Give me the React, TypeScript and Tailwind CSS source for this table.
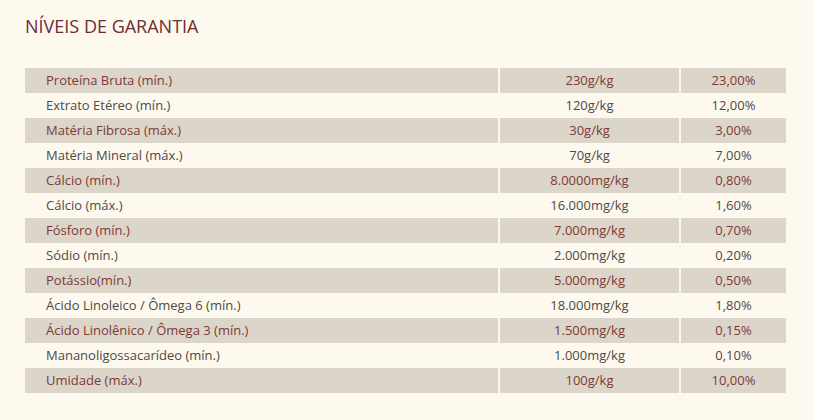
const rows = [
  ["Proteína Bruta (mín.)", "230g/kg", "23,00%"],
  ["Extrato Etéreo (mín.)", "120g/kg", "12,00%"],
  ["Matéria Fibrosa (máx.)", "30g/kg", "3,00%"],
  ["Matéria Mineral (máx.)", "70g/kg", "7,00%"],
  ["Cálcio (mín.)", "8.0000mg/kg", "0,80%"],
  ["Cálcio (máx.)", "16.000mg/kg", "1,60%"],
  ["Fósforo (mín.)", "7.000mg/kg", "0,70%"],
  ["Sódio (mín.)", "2.000mg/kg", "0,20%"],
  ["Potássio(mín.)", "5.000mg/kg", "0,50%"],
  ["Ácido Linoleico / Ômega 6 (mín.)", "18.000mg/kg", "1,80%"],
  ["Ácido Linolênico / Ômega 3 (mín.)", "1.500mg/kg", "0,15%"],
  ["Mananoligossacarídeo (mín.)", "1.000mg/kg", "0,10%"],
  ["Umidade (máx.)", "100g/kg", "10,00%"],
];

export default function App() {
  return (
    <div className="min-h-[420px] w-[814px] bg-[#fdf9ef] px-[25px] pt-[14px] font-['Open_Sans',sans-serif]">
      <h2 className="text-[18px] leading-[25px] text-[#6b2d33]">NÍVEIS DE GARANTIA</h2>

      <div className="mt-[29px] w-[761px]">
        {rows.map((r, i) => {
          const shaded = i % 2 === 0;
          return (
            <div
              key={i}
              className={
                shaded
                  ? "grid h-[25px] grid-cols-[475px_181px_105px] bg-[#dcd5c9] text-[13px] text-[#7d3a37]"
                  : "grid h-[25px] grid-cols-[475px_181px_105px] text-[13px] text-[#4d4a48]"
              }
            >
              <div className="flex items-center border-r-2 border-[#fcf8f0] pl-[21px]">{r[0]}</div>
              <div className="flex items-center justify-center border-r-2 border-[#fcf8f0]">{r[1]}</div>
              <div className="flex items-center justify-center">{r[2]}</div>
            </div>
          );
        })}
      </div>
    </div>
  );
}
